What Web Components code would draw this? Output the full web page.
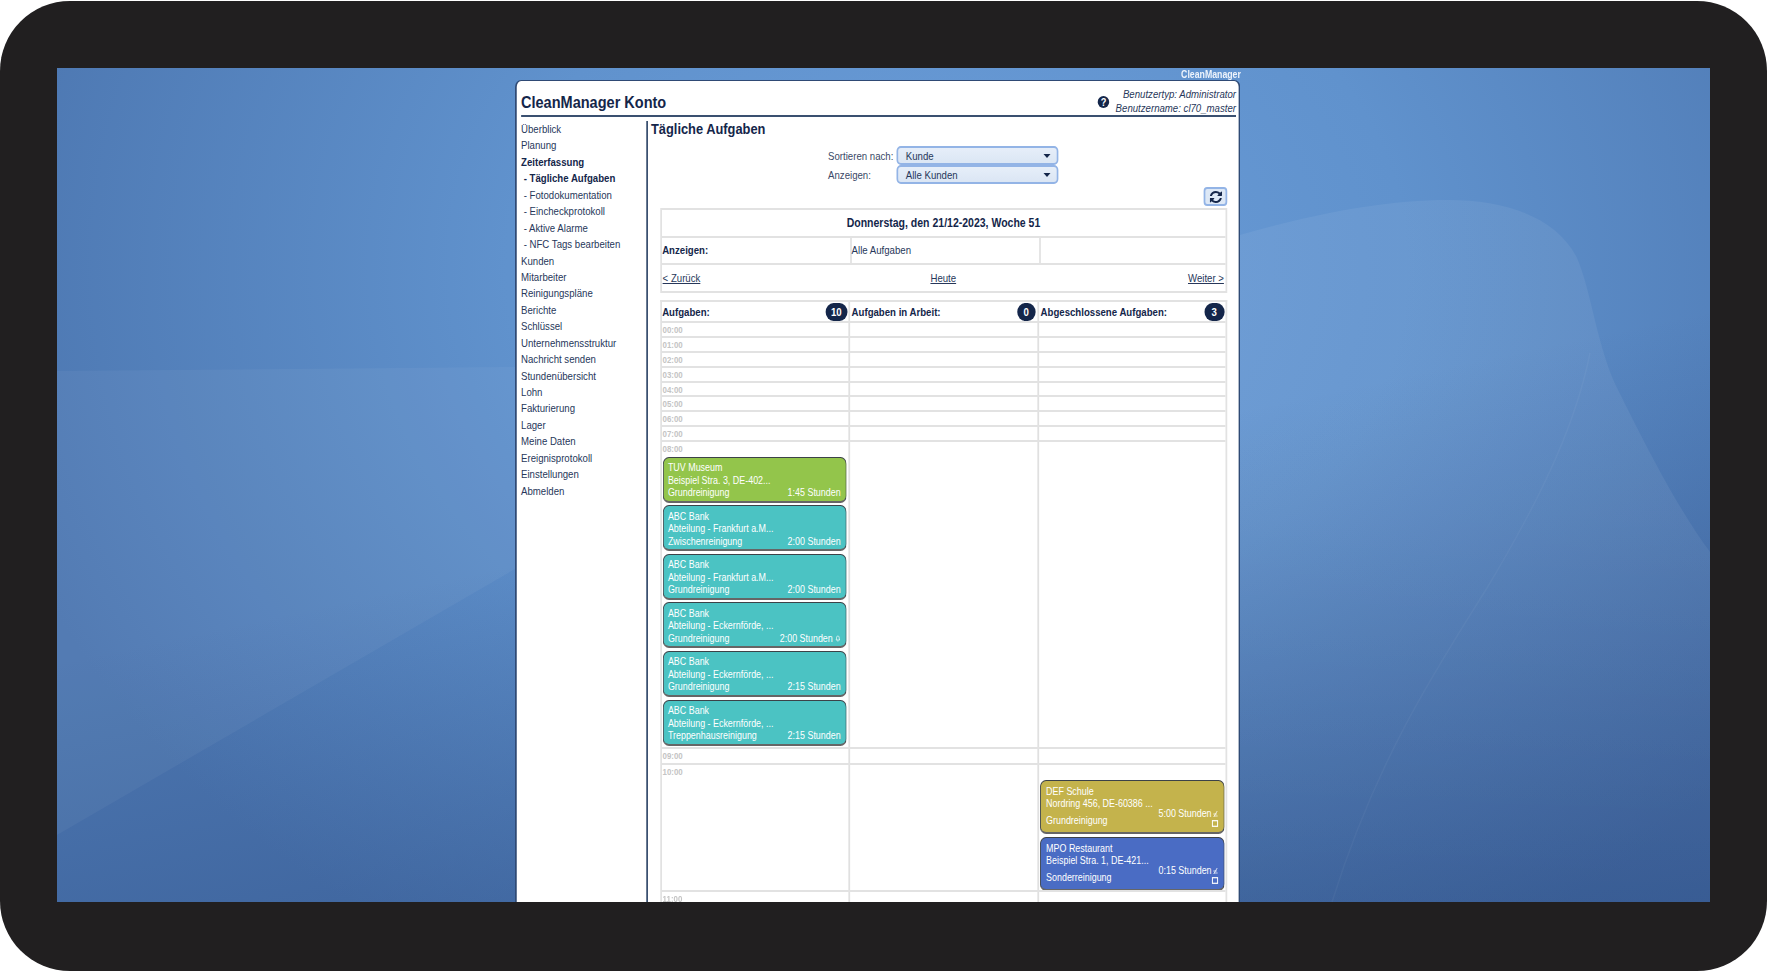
<!DOCTYPE html>
<html lang="de">
<head>
<meta charset="utf-8">
<title>CleanManager Konto</title>
<style>
  html, body { margin: 0; background: #fff; overflow: hidden; }
  body { font-family: "Liberation Sans", Arial, sans-serif; color: #1a2a4a; }
</style>
</head>
<body>
<cm-desktop>
  <cm-panel>
    <cm-account slot="account" type="Administrator" user="cl70_master"></cm-account>
    <cm-nav slot="nav"></cm-nav>

    <cm-form-row label="Sortieren nach:" value="Kunde"></cm-form-row>
    <cm-form-row label="Anzeigen:" value="Alle Kunden"></cm-form-row>
    <cm-refresh></cm-refresh>
    <cm-day-table></cm-day-table>

    <cm-schedule>
      <cm-hour label="00:00" h="15"></cm-hour>
      <cm-hour label="01:00" h="15"></cm-hour>
      <cm-hour label="02:00" h="15"></cm-hour>
      <cm-hour label="03:00" h="15"></cm-hour>
      <cm-hour label="04:00" h="14"></cm-hour>
      <cm-hour label="05:00" h="15"></cm-hour>
      <cm-hour label="06:00" h="15"></cm-hour>
      <cm-hour label="07:00" h="15"></cm-hour>
      <cm-hour label="08:00" h="307">
        <cm-task slot="a" color="#93c54b" name="TUV Museum" addr="Beispiel Stra. 3, DE-402..." kind="Grundreinigung" time="1:45 Stunden"></cm-task>
        <cm-task slot="a" color="#4bc3c3" name="ABC Bank" addr="Abteilung - Frankfurt a.M..." kind="Zwischenreinigung" time="2:00 Stunden"></cm-task>
        <cm-task slot="a" color="#4bc3c3" name="ABC Bank" addr="Abteilung - Frankfurt a.M..." kind="Grundreinigung" time="2:00 Stunden"></cm-task>
        <cm-task slot="a" color="#4bc3c3" name="ABC Bank" addr="Abteilung - Eckernförde, ..." kind="Grundreinigung" time="2:00 Stunden" bell></cm-task>
        <cm-task slot="a" color="#4bc3c3" name="ABC Bank" addr="Abteilung - Eckernförde, ..." kind="Grundreinigung" time="2:15 Stunden"></cm-task>
        <cm-task slot="a" color="#4bc3c3" name="ABC Bank" addr="Abteilung - Eckernförde, ..." kind="Treppenhausreinigung" time="2:15 Stunden"></cm-task>
      </cm-hour>
      <cm-hour label="09:00" h="16"></cm-hour>
      <cm-hour label="10:00" h="127">
        <cm-task slot="c" done color="#c4b34c" name="DEF Schule" addr="Nordring 456, DE-60386 ..." kind="Grundreinigung" time="5:00 Stunden"></cm-task>
        <cm-task slot="c" done color="#4a6cc4" name="MPO Restaurant" addr="Beispiel Stra. 1, DE-421..." kind="Sonderreinigung" time="0:15 Stunden"></cm-task>
      </cm-hour>
      <cm-hour label="11:00" h="40"></cm-hour>
    </cm-schedule>
  </cm-panel>
</cm-desktop>

<script>
// the whole panel is squeezed horizontally in the reference, so it is laid out
// wider and scaled down by .875 (see cm-panel)

class CmDesktop extends HTMLElement {
  constructor() {
    super();
    this.attachShadow({ mode: "open" });
    this.shadowRoot.innerHTML = `
      <style>
        :host { display: block; width: 1767px; height: 971px; padding-top: 1px; box-sizing: border-box; background: #fff; }
        .frame {
          height: 970px;
          box-sizing: border-box;
          background: #211f20;
          border-radius: 70px;
          padding: 67px 57px 69px;
        }
        .screen {
          position: relative;
          height: 834px;
          overflow: hidden;
          padding-left: 458px;
          box-sizing: border-box;
          background:
            linear-gradient(168deg, rgba(35,65,120,0) 50%, rgba(35,65,120,.52) 100%),
            radial-gradient(ellipse 1000px 800px at 900px 200px, #6a9cd8 0%, #6092cd 45%, #4c76b0 100%);
        }
        svg { position: absolute; left: 0; top: 0; }
      </style>
      <div class="frame">
        <div class="screen">
          <svg width="1653" height="834" viewBox="0 0 1653 834">
            <defs>
              <linearGradient id="fade" x1="0" y1="0" x2="0" y2="1">
                <stop offset="0" stop-color="#fff" stop-opacity=".06"/>
                <stop offset=".45" stop-color="#fff" stop-opacity=".06"/>
                <stop offset="1" stop-color="#fff" stop-opacity=".01"/>
              </linearGradient>
            </defs>
            <path d="M0 303L458 299V501L0 767Z" fill="#fff" fill-opacity=".045"/>
            <path d="M1183 167C1260 145 1330 132 1391 132C1450 132 1500 150 1520 190C1535 225 1540 280 1561 322C1585 370 1620 440 1653 484V834H1183Z" fill="url(#fade)"/>
            <path d="M1533 285C1520 350 1490 420 1430 520C1380 600 1320 690 1275 834" fill="none" stroke="#fff" stroke-opacity=".04" stroke-width="1.5"/>
          </svg>
          <slot></slot>
        </div>
      </div>
    `;
  }
}

class CmPanel extends HTMLElement {
  constructor() {
    super();
    this.attachShadow({ mode: "open" });
    this.shadowRoot.innerHTML = `
      <style>
        :host {
          display: block;
          position: relative;
          width: 828.6px;
          transform: scaleX(.875);
          transform-origin: 0 0;
          font-size: 11px;
          color: #1a2a4a;
        }
        .brand {
          height: 12px;
          line-height: 13px;
          margin-right: -1px;
          text-align: right;
          font-size: 10px;
          font-weight: bold;
          color: #eef4fc;
        }
        .box {
          background: #fff;
          border: 2px solid #2f4a75;
          border-top-width: 1px;
          border-bottom: 0;
          border-radius: 7px 7px 0 0;
          padding: 0 2.6px 0 4.9px;
          height: 830px;
          box-sizing: border-box;
          filter: blur(.3px);
        }
        header {
          display: flex;
          justify-content: space-between;
          align-items: flex-end;
          height: 34px;
          border-bottom: 2px solid #3a5070;
          box-sizing: content-box;
        }
        h1 { margin: 0 0 1.6px; font-size: 16.6px; line-height: 20px; font-weight: bold; color: #14264a; }
        .body { display: flex; margin-top: 4px; height: 800px; }
        .side { width: 143px; flex: none; }
        main { flex: 1; border-left: 2px solid #3a5070; padding-left: 3.5px; }
        h2 { margin: 0 0 9px; height: 16px; font-size: 14.7px; line-height: 16px; font-weight: bold; color: #14264a; }
      </style>
      <div class="brand">CleanManager</div>
      <div class="box">
        <header>
          <h1>CleanManager Konto</h1>
          <slot name="account"></slot>
        </header>
        <div class="body">
          <div class="side"><slot name="nav"></slot></div>
          <main>
            <h2>Tägliche Aufgaben</h2>
            <slot></slot>
          </main>
        </div>
      </div>
    `;
  }
}

class CmAccount extends HTMLElement {
  constructor() {
    super();
    this.attachShadow({ mode: "open" });
    this.shadowRoot.innerHTML = `
      <style>
        :host { display: flex; align-items: center; gap: 7px; height: 30px; margin-bottom: -1.5px; }
        .help {
          width: 13.5px; height: 12px;
          border-radius: 50%;
          background: #14264a;
          color: #fff;
          font: bold 10.5px/12px "Liberation Sans", sans-serif;
          text-align: center;
        }
        .info { font-style: italic; font-size: 11px; line-height: 13.5px; text-align: right; color: #27375a; }
      </style>
      <div class="help">?</div>
      <div class="info">
        <div>Benutzertyp: ${this.getAttribute("type")}</div>
        <div>Benutzername: ${this.getAttribute("user")}</div>
      </div>
    `;
  }
}

const NAV_ITEMS = [
  ["Überblick"], ["Planung"], ["Zeiterfassung", "bold"],
  ["- Tägliche Aufgaben", "sub bold"], ["- Fotodokumentation", "sub"], ["- Eincheckprotokoll", "sub"],
  ["- Aktive Alarme", "sub"], ["- NFC Tags bearbeiten", "sub"],
  ["Kunden"], ["Mitarbeiter"], ["Reinigungspläne"], ["Berichte"], ["Schlüssel"],
  ["Unternehmensstruktur"], ["Nachricht senden"], ["Stundenübersicht"], ["Lohn"], ["Fakturierung"],
  ["Lager"], ["Meine Daten"], ["Ereignisprotokoll"], ["Einstellungen"], ["Abmelden"]
];

class CmNav extends HTMLElement {
  constructor() {
    super();
    this.attachShadow({ mode: "open" });
    const items = NAV_ITEMS.map(([text, cls]) => `<a class="${cls || ""}">${text}</a>`).join("");
    this.shadowRoot.innerHTML = `
      <style>
        :host { display: flex; flex-direction: column; font-size: 11px; color: #27375a; }
        a { display: block; height: 16.45px; line-height: 16.45px; white-space: nowrap; }
        .bold { font-weight: bold; color: #14264a; }
        .sub { padding-left: 3px; }
      </style>
      ${items}
    `;
  }
}

class CmFormRow extends HTMLElement {
  constructor() {
    super();
    this.attachShadow({ mode: "open" });
    this.shadowRoot.innerHTML = `
      <style>
        :host { display: flex; align-items: center; margin-left: 202.4px; height: 19px; font-size: 11px; color: #3a4866; }
        label { width: 77.8px; flex: none; }
        .select {
          display: flex;
          justify-content: space-between;
          align-items: center;
          width: 185px;
          height: 19px;
          box-sizing: border-box;
          padding: 0 7px 0 9px;
          border: 2px solid #93b4e6;
          border-radius: 5px;
          background: linear-gradient(#e6eef9, #dbe6f4);
          color: #27375a;
        }
        .arrow { width: 0; height: 0; border: 4px solid transparent; border-top: 4.5px solid #14264a; border-bottom: 0; }
      </style>
      <label>${this.getAttribute("label")}</label>
      <div class="select"><span>${this.getAttribute("value")}</span><span class="arrow"></span></div>
    `;
  }
}

class CmRefresh extends HTMLElement {
  constructor() {
    super();
    this.attachShadow({ mode: "open" });
    this.shadowRoot.innerHTML = `
      <style>
        :host { display: flex; justify-content: flex-end; width: 658.3px; margin: 3px 0 2px; }
        button {
          display: flex;
          align-items: center;
          justify-content: center;
          width: 26.3px;
          height: 19px;
          padding: 0;
          border: 2px solid #93b4e6;
          border-radius: 4px;
          background: #dde8f6;
        }
      </style>
      <button>
        <svg width="14" height="12" viewBox="0 0 1536 1536" preserveAspectRatio="none"><path fill="#14264a" d="M1511 928q0 5-1 7-64 268-268 434.5t-478 166.5q-146 0-282.5-55t-243.5-157l-129 129q-19 19-45 19t-45-19-19-45v-448q0-26 19-45t45-19h448q26 0 45 19t19 45-19 45l-137 137q71 66 161 102t187 36q134 0 250-65t186-179q11-17 53-117 8-23 30-23h192q13 0 22.5 9.5t9.5 22.5zm25-800v448q0 26-19 45t-45 19h-448q-26 0-45-19t-19-45 19-45l138-138q-148-137-349-137-134 0-250 65t-186 179q-11 17-53 117-8 23-30 23h-199q-13 0-22.5-9.5t-9.5-22.5v-7q65-268 270-434.5t480-166.5q146 0 284 55.5t245 156.5l130-129q19-19 45-19t45 19 19 45z"/></svg>
      </button>
    `;
  }
}

class CmDayTable extends HTMLElement {
  constructor() {
    super();
    this.attachShadow({ mode: "open" });
    this.shadowRoot.innerHTML = `
      <style>
        :host {
          display: block;
          width: 648px;
          margin-left: 10.3px;
          box-sizing: border-box;
          border: 2px solid #e2e2e2;
          font-size: 11px;
          color: #27375a;
        }
        .row { display: grid; grid-template-columns: 215px 216px 213px; border-bottom: 2px solid #e2e2e2; align-items: stretch; }
        .row:last-child { border-bottom: 0; }
        .date { display: block; height: 26px; line-height: 26px; text-align: center; font-size: 12px; font-weight: bold; color: #14264a; }
        .cols > div { height: 25px; line-height: 25px; padding-left: .5px; }
        .cols > div + div { border-left: 2px solid #e2e2e2; padding-left: 0; }
        b { color: #14264a; }
        .links { display: flex; justify-content: space-between; height: 26px; line-height: 26px; padding: 0 1.5px 0 1px; text-decoration: underline; }
      </style>
      <div class="row date">Donnerstag, den 21/12-2023, Woche 51</div>
      <div class="row cols"><div><b>Anzeigen:</b></div><div>Alle Aufgaben</div><div></div></div>
      <div class="row links" style="display:flex"><span>&lt; Zurück</span><span style="margin-right:2px">Heute</span><span>Weiter &gt;</span></div>
    `;
  }
}

class CmSchedule extends HTMLElement {
  constructor() {
    super();
    this.attachShadow({ mode: "open" });
    this.shadowRoot.innerHTML = `
      <style>
        :host {
          display: block;
          width: 648px;
          margin: 7px 0 0 10.3px;
          box-sizing: border-box;
          border: 2px solid #e2e2e2;
          border-bottom: 0;
        }
        .head { display: grid; grid-template-columns: 213px 216px 215px; height: 19px; box-sizing: content-box; border-bottom: 2px solid #e2e2e2; }
        .head > div {
          display: flex;
          justify-content: space-between;
          align-items: center;
          padding: 0 2px;
          font-size: 11px;
          font-weight: bold;
          color: #14264a;
        }
        .head > div:first-child { padding-left: .5px; }
        .head > div + div { border-left: 2px solid #e2e2e2; }
        .badge {
          min-width: 13px;
          height: 18px;
          padding: 0 6px;
          border-radius: 9px;
          background: #14264a;
          color: #fff;
          font-size: 11px;
          line-height: 18px;
          text-align: center;
        }
      </style>
      <div class="head">
        <div><span>Aufgaben:</span><span class="badge" style="margin-right:-1px">10</span></div>
        <div><span>Aufgaben in Arbeit:</span><span class="badge" style="padding:0 4px">0</span></div>
        <div><span>Abgeschlossene Aufgaben:</span><span class="badge" style="padding:0 5px;margin-right:-1px">3</span></div>
      </div>
      <slot></slot>
    `;
  }
}

class CmHour extends HTMLElement {
  constructor() {
    super();
    this.attachShadow({ mode: "open" });
    this.shadowRoot.innerHTML = `
      <style>
        :host {
          display: grid;
          grid-template-columns: 213px 216px 215px;
          box-sizing: border-box;
          height: ${this.getAttribute("h")}px;
          border-bottom: 2px solid #e2e2e2;
          overflow: hidden;
        }
        .cell { display: flex; flex-direction: column; gap: 2.6px; padding-top: 15px; min-width: 0; }
        .cell + .cell { border-left: 2px solid #e0e0e0; gap: 3px; }
        .a { padding-top: 0; }
        .time { height: 12px; line-height: 15px; padding-left: 1px; font-size: 9px; font-weight: bold; color: #c4c4c4; }
      </style>
      <div class="cell a"><div class="time">${this.getAttribute("label")}</div><slot name="a"></slot></div>
      <div class="cell"><slot name="b"></slot></div>
      <div class="cell"><slot name="c"></slot></div>
    `;
  }
}

class CmTask extends HTMLElement {
  constructor() {
    super();
    this.attachShadow({ mode: "open" });
    const done = this.hasAttribute("done");
    const bell = this.hasAttribute("bell")
      ? `<svg width="6" height="7" viewBox="0 0 6 7" style="margin-left:3px"><path d="M3 1C1.8 1 1.5 2 1.5 3.2L1 5H5L4.5 3.2C4.5 2 4.2 1 3 1ZM2.4 6H3.6" fill="none" stroke="#fff" stroke-width=".8"/></svg>`
      : "";
    const pencil = done
      ? `<svg width="7" height="8" viewBox="0 0 7 8" style="margin-left:1px"><path d="M1.5 7L5.5 1M1 4H5M2 6H6" fill="none" stroke="#fff" stroke-width=".8"/></svg>`
      : "";
    const box = done
      ? `<svg class="box" width="8" height="7" viewBox="0 0 8 7"><rect x="1" y=".7" width="6" height="5.6" fill="none" stroke="#fff" stroke-width="1.2"/></svg>`
      : "";
    this.shadowRoot.innerHTML = `
      <style>
        :host {
          display: block;
          flex: none;
          box-sizing: border-box;
          width: ${done ? "211px" : "210px"};
          height: ${done ? "54px" : "46px"};
          margin-left: 1.4px;
          padding: 4.5px ${done ? "6px" : "5.9px"} 0 ${done ? "5.9px" : "4.7px"};
          background: ${this.getAttribute("color")};
          border: 1px solid #3c4248;
          border-bottom: 2px solid #666;
          border-radius: 7px;
          color: #fff;
          font-size: 10.2px;
          line-height: 12.5px;
          white-space: nowrap;
        }
        .foot { display: flex; justify-content: space-between; align-items: ${done ? "center" : "baseline"}; }
        .right { text-align: right; line-height: 10px; margin-top: ${done ? "-2px" : "0"}; }
        .right div { display: flex; justify-content: flex-end; align-items: center; }
        .kind { ${done ? "margin-top:4px;" : ""} }
        .box { display: block; margin: 1px 0 0 auto; }
      </style>
      <div>${this.getAttribute("name")}</div>
      <div>${this.getAttribute("addr")}</div>
      <div class="foot">
        <span class="kind">${this.getAttribute("kind")}</span>
        <span class="right"><div>${this.getAttribute("time")}${bell}${pencil}</div>${box}</span>
      </div>
    `;
  }
}

customElements.define("cm-desktop", CmDesktop);
customElements.define("cm-panel", CmPanel);
customElements.define("cm-account", CmAccount);
customElements.define("cm-nav", CmNav);
customElements.define("cm-form-row", CmFormRow);
customElements.define("cm-refresh", CmRefresh);
customElements.define("cm-day-table", CmDayTable);
customElements.define("cm-schedule", CmSchedule);
customElements.define("cm-hour", CmHour);
customElements.define("cm-task", CmTask);
</script>
</body>
</html>
